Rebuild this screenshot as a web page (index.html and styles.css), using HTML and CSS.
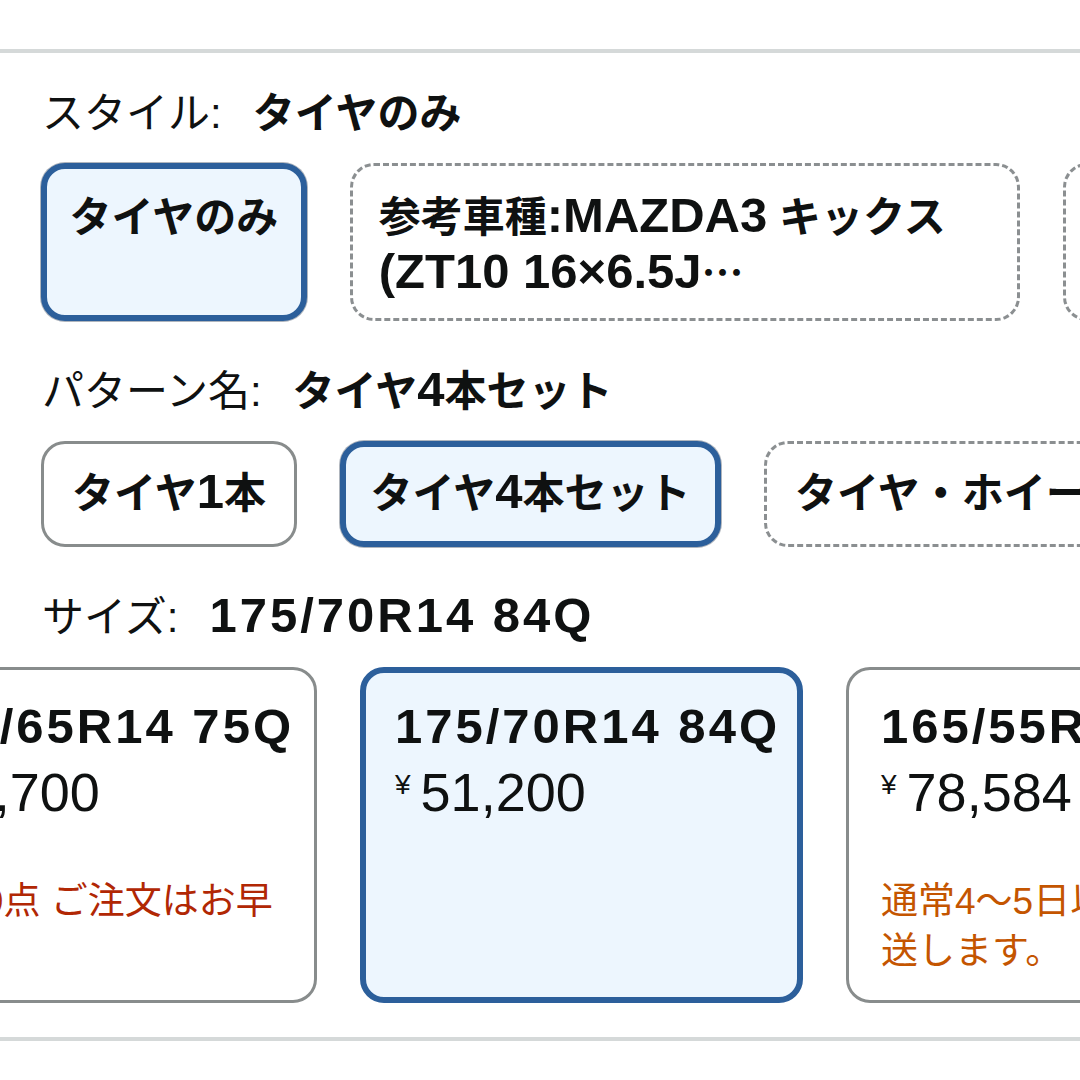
FILE: index.html
```html
<!DOCTYPE html>
<html lang="ja">
<head>
<meta charset="utf-8">
<title>バリエーション選択</title>
<link rel="stylesheet" href="styles.css">
</head>
<body>
<div class="page">
  <div class="rule"></div>
  <section class="twister">
    <div class="dim">
      <div class="dim-head"><span class="dim-label">スタイル:</span><span class="dim-value">タイヤのみ</span></div>
      <div class="opts opts-tall">
        <div class="opt opt-sel">タイヤのみ</div>
        <div class="opt opt-na opt-wide">参考車種<span class="lt">:MAZDA3</span> キックス<br><span class="lt">(ZT10 16×6.5J</span><span class="ell">…</span></div>
        <div class="opt opt-na">参考車種<span class="lt">:MAZDA3</span></div>
      </div>
    </div>
    <div class="dim">
      <div class="dim-head"><span class="dim-label">パターン名:</span><span class="dim-value">タイヤ<span class="lt">4</span>本セット</span></div>
      <div class="opts">
        <div class="opt opt-avail">タイヤ<span class="lt">1</span>本</div>
        <div class="opt opt-sel">タイヤ<span class="lt">4</span>本セット</div>
        <div class="opt opt-na">タイヤ・ホイールセット</div>
      </div>
    </div>
    <div class="dim">
      <div class="dim-head"><span class="dim-label">サイズ:</span><span class="dim-value"><span class="lt num">175/70R14 84Q</span></span></div>
      <div class="cards">
        <div class="card card-avail">
          <div class="card-title">155/65R14 75Q</div>
          <div class="card-price"><span class="yen">¥</span><span class="amount">40,700</span></div>
          <div class="card-msg msg-low">残り9点 ご注文はお早めに。</div>
        </div>
        <div class="card card-sel">
          <div class="card-title">175/70R14 84Q</div>
          <div class="card-price"><span class="yen">¥</span><span class="amount">51,200</span></div>
        </div>
        <div class="card card-avail">
          <div class="card-title">165/55R15 75V</div>
          <div class="card-price"><span class="yen">¥</span><span class="amount">78,584</span></div>
          <div class="card-msg msg-ship">通常4～5日以内に発<br>送します。</div>
        </div>
      </div>
    </div>
  </section>
  <div class="rule"></div>
</div>
</body>
</html>
```

FILE: styles.css
```css
* { box-sizing: border-box; }

html, body {
  margin: 0;
  padding: 0;
  background: #ffffff;
  overflow: hidden;
}

body {
  width: 1080px;
  height: 1080px;
  font-family: "Liberation Sans", "Noto Sans CJK JP", sans-serif;
  color: #0f1111;
  font-size: 42px;
  line-height: 56px;
}

.page {
  padding-top: 49px;
}

.rule {
  height: 4px;
  background: #d5d9d9;
}

.twister {
  padding: 33px 0 34px 41px;
}

.dim + .dim {
  margin-top: 43px;
}

.dim-head {
  display: flex;
  align-items: baseline;
  margin-bottom: 21px;
  padding-left: 1px;
  white-space: nowrap;
}

.dim-label {
  font-weight: 400;
}

.dim-value {
  font-weight: 700;
  margin-left: 31px;
}

.lt {
  font-size: 49px;
  line-height: 1;
}

.num {
  letter-spacing: 3px;
}

.ell {
  font-family: "Noto Sans CJK JP", sans-serif;
  font-weight: 700;
  line-height: 1;
}

.opts {
  display: flex;
  gap: 43px;
  overflow: hidden;
  padding: 1px 0 1px 1px;
  margin: -1px 0 -1px -1px;
}

.opt {
  flex: none;
  border-radius: 24px;
  font-weight: 700;
  white-space: nowrap;
}

.opt-avail {
  border: 3px solid #888c8c;
  background: #ffffff;
  padding: 22px 28px;
}

.opt-sel {
  border: 6px solid #2c5f9b;
  background: #edf6fe;
  padding: 19px 24.5px;
  box-shadow: 0 0 0 1px rgba(110, 120, 135, 0.55);
}

.opt-na {
  border: 3px dashed #8b8f91;
  background: #ffffff;
  padding: 22px 28px;
}

.opts-tall .opt-sel {
  padding: 21px 22.5px 17px;
}

.opts-tall .opt-na {
  padding: 24px 26px 16px;
}

.opt-wide {
  width: 670px;
}

.cards {
  display: flex;
  gap: 43px;
  margin-left: -167px;
}

.card {
  flex: none;
  width: 443px;
  height: 336px;
  border-radius: 24px;
  overflow: hidden;
}

.card-avail {
  border: 3px solid #888c8c;
  background: #ffffff;
  padding: 28px 32px;
}

.card-sel {
  border: 6px solid #2c5f9b;
  background: #edf6fe;
  padding: 25px 29px;
}

.card-title {
  font-size: 49px;
  line-height: 56px;
  font-weight: 700;
  letter-spacing: 3px;
  white-space: nowrap;
}

.card-price {
  display: flex;
  align-items: flex-start;
  margin-top: 8px;
  white-space: nowrap;
}

.yen {
  font-size: 28px;
  line-height: 1;
  margin-top: 9px;
  margin-right: 10px;
}

.amount {
  font-size: 54px;
  line-height: 60px;
}

.card-msg {
  margin-top: 55px;
  font-size: 37px;
  line-height: 50px;
}

.msg-low {
  color: #b12704;
  height: 50px;
  overflow: hidden;
}

.msg-ship {
  color: #c45500;
  white-space: nowrap;
}
```
